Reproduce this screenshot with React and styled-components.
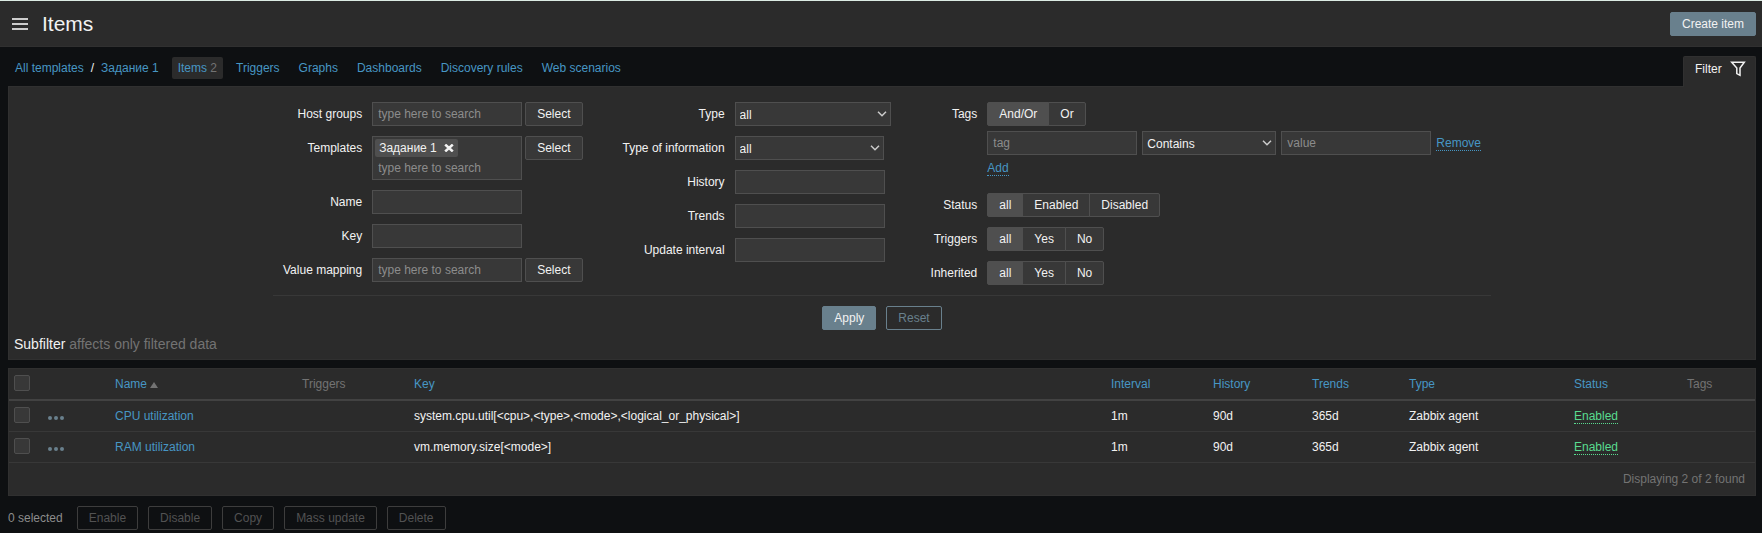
import React, { useState } from "react";
import styled, { createGlobalStyle, css } from "styled-components";

const color = {
  page: "#0e1012",
  panel: "#2b2b2b",
  line: "#303030",
  rowLine: "#383838",
  field: "#383838",
  fieldLine: "#4f4f4f",
  text: "#f2f2f2",
  muted: "#737373",
  placeholder: "#8c8c8c",
  link: "#4796c4",
  accent: "#69808d",
  green: "#59db8f",
};

const GlobalStyle = createGlobalStyle`
  *, *::before, *::after { box-sizing: border-box; }
  body {
    margin: 0;
    background: ${color.page};
    color: ${color.text};
    font: 12px/24px "Liberation Sans", Arial, sans-serif;
  }
  button, input, select { font: inherit; color: inherit; margin: 0; }
`;

const Header = styled.header`
  display: flex;
  align-items: center;
  gap: 14px;
  height: 47px;
  padding: 0 6px 0 12px;
  background: ${color.panel};
  border-top: 1px solid #dcebe3;
  border-bottom: 1px solid ${color.line};
`;

const MenuButton = styled.button`
  display: flex;
  padding: 0;
  border: 0;
  background: none;
`;

const Title = styled.h1`
  flex: 1;
  margin: 0;
  font-size: 21px;
  line-height: 24px;
  font-weight: normal;
`;

const Button = styled.button`
  height: 24px;
  padding: 0 11px;
  line-height: 22px;
  border: 1px solid ${color.fieldLine};
  border-radius: 2px;
  background: ${color.field};
  white-space: nowrap;
  ${(p) =>
    p.$kind === "primary" &&
    css`
      background: ${color.accent};
      border-color: ${color.accent};
    `}
  ${(p) =>
    p.$kind === "outline" &&
    css`
      background: none;
      color: ${color.accent};
      border-color: ${color.accent};
    `}
  &:disabled {
    background: none;
    color: #525252;
    border-color: #3d3d3d;
  }
`;

const Main = styled.main`
  padding: 0 6px 0 8px;
`;

const TopRow = styled.div`
  display: flex;
  justify-content: space-between;
  align-items: flex-start;
  height: 39px;
  padding-top: 9px;
`;

const Nav = styled.nav`
  display: flex;
  align-items: center;
  gap: 7px;
  padding: 1px 0 0 1px;
  line-height: 22px;
`;

const Link = styled.a`
  color: ${color.link};
  text-decoration: none;
`;

const NavLink = styled(Link)`
  padding: 0 6px;
  border-radius: 2px;
  white-space: nowrap;
  background: ${(p) => (p.$active ? color.panel : "none")};
`;

const Crumbs = styled.div`
  display: flex;
  gap: 1px;
`;

const Count = styled.span`
  color: ${color.muted};
`;

const FilterTab = styled.button`
  position: relative;
  display: flex;
  justify-content: space-between;
  width: 73px;
  height: 31px;
  padding: 4px 9px 0 11px;
  line-height: 16px;
  border: 1px solid ${color.line};
  border-bottom: 0;
  border-radius: 2px 2px 0 0;
  background: ${color.panel};
`;

const Panel = styled.section`
  background: ${color.panel};
  border: 1px solid ${color.line};
`;

const FilterForm = styled.form`
  padding: 15px 5px 0;
`;

const Columns = styled.div`
  display: flex;
  gap: 40px;
  width: fit-content;
  margin: 0 auto;
  padding: 0 10px;
  padding-bottom: 10px;
  border-bottom: 1px solid #383838;
`;

const Column = styled.div`
  display: grid;
  grid-template-columns: auto auto;
  column-gap: 10px;
  row-gap: 10px;
  align-content: start;
  justify-items: start;
`;

const labelStyle = css`
  justify-self: end;
  white-space: nowrap;
`;

const Label = styled.label`
  ${labelStyle}
`;

const GroupLabel = styled.span`
  ${labelStyle}
`;

const Line = styled.div`
  display: flex;
  align-items: flex-start;
  gap: ${(p) => p.$gap || 3}px;
`;

const TextInput = styled.input`
  display: block;
  width: 150px;
  height: 24px;
  padding: 0 5px;
  border: 1px solid ${color.fieldLine};
  border-radius: 0;
  background: ${color.field};
  &::placeholder { color: ${color.placeholder}; opacity: 1; }
`;

const MultiSelect = styled.div`
  width: 150px;
  height: 44px;
  padding: 2px;
  border: 1px solid ${color.fieldLine};
  background: ${color.field};
`;

const MultiInput = styled(TextInput)`
  width: 100%;
  height: 21px;
  padding: 0 3px;
  border: 0;
`;

const Chip = styled.span`
  display: flex;
  align-items: center;
  justify-content: space-between;
  width: 83px;
  height: 18px;
  padding: 0 4px;
  border-radius: 2px;
  background: ${color.fieldLine};
`;

const ChipRemove = styled.button`
  display: flex;
  padding: 0;
  border: 0;
  background: none;
`;

const SelectWrap = styled.span`
  display: grid;
  align-items: center;
  width: ${(p) => p.$width}px;
  & > * { grid-area: 1 / 1; }
  & > svg { justify-self: end; margin-right: 4px; pointer-events: none; }
`;

const NativeSelect = styled.select`
  appearance: none;
  width: 100%;
  height: 24px;
  padding: 0 20px 1px 4px;
  border: 1px solid ${color.fieldLine};
  border-radius: 0;
  background: ${color.field};
`;

const Segments = styled.div`
  display: flex;
`;

const Segment = styled.label`
  position: relative;
  height: 24px;
  padding: 0 11px;
  line-height: 22px;
  border: 1px solid ${color.fieldLine};
  background: ${color.field};
  white-space: nowrap;
  &:not(:first-child) { margin-left: -1px; }
  &:first-child { border-radius: 2px 0 0 2px; }
  &:last-child { border-radius: 0 2px 2px 0; }
  &:has(input:checked) { background: ${color.fieldLine}; }
`;

const SegmentInput = styled.input`
  position: absolute;
  inset: 0;
  width: 100%;
  height: 100%;
  opacity: 0;
`;

const TagBlock = styled.div`
  display: flex;
  flex-direction: column;
  align-items: flex-start;
  gap: 5px;
  padding-bottom: 6px;
`;

const DottedButton = styled.button`
  padding: 0;
  line-height: 14px;
  border: 0;
  border-bottom: 1px dotted;
  background: none;
  color: ${(p) => (p.$green ? color.green : color.link)};
`;

const AddSlot = styled.div`
  display: flex;
  padding: 1px 0;
  line-height: 14px;
`;

const RemoveSlot = styled(AddSlot)`
  padding: 5px 0 4px;
`;

const FormButtons = styled.div`
  display: flex;
  justify-content: center;
  gap: 10px;
  padding-top: 10px;
`;

const Subfilter = styled.h4`
  margin: 0;
  padding: 2px 0 3px;
  font-size: 14px;
  font-weight: normal;
`;

const TablePanel = styled(Panel)`
  margin-top: 8px;
`;

const Table = styled.table`
  width: 100%;
  table-layout: fixed;
  border-collapse: separate;
  border-spacing: 0;
  line-height: 16px;
`;

const Cell = styled.td`
  height: 31px;
  padding: 0 5px;
  border-bottom: 1px solid ${color.rowLine};
  text-align: left;
  white-space: nowrap;
`;

const HeadCell = styled(Cell)`
  height: 32px;
  border-bottom: 2px solid #424242;
  font-weight: normal;
  color: ${color.muted};
`;

const FootCell = styled.td`
  height: 32px;
  padding: 0 10px;
  text-align: right;
  color: ${color.muted};
`;

const Checkbox = styled.input`
  appearance: none;
  display: block;
  width: 16px;
  height: 16px;
  margin: 0 0 2px;
  border: 1px solid ${color.fieldLine};
  border-radius: 2px;
  background: ${color.field};
  &:checked { background: ${color.accent}; }
`;

const DotsButton = styled.button`
  display: flex;
  padding: 4px 0 0;
  border: 0;
  background: none;
`;

const SortArrow = styled.span`
  display: inline-block;
  margin-left: 3px;
  border: 4px solid transparent;
  border-top: 0;
  border-bottom: 6px solid ${color.muted};
`;

const Actions = styled.footer`
  display: flex;
  gap: 10px;
  padding: 10px 0 3px;
`;

const Selected = styled.span`
  margin-right: 4px;
  color: #8c8c8c;
`;

const Chevron = () => (
  <svg width="10" height="6" viewBox="0 0 10 6" fill="none" stroke="#ccc" strokeWidth="1.5" aria-hidden="true">
    <path d="M1 .8 5 4.8 9 .8" />
  </svg>
);

function Select({ options, width, ...rest }) {
  return (
    <SelectWrap $width={width}>
      <NativeSelect {...rest}>
        {options.map((o) => (
          <option key={o}>{o}</option>
        ))}
      </NativeSelect>
      <Chevron />
    </SelectWrap>
  );
}

function RadioRow({ label, name, options }) {
  const [value, setValue] = useState(options[0]);
  return (
    <Segments role="radiogroup" aria-label={label}>
      {options.map((o) => (
        <Segment key={o}>
          <SegmentInput type="radio" name={name} checked={value === o} onChange={() => setValue(o)} />
          {o}
        </Segment>
      ))}
    </Segments>
  );
}

function Field({ id, label, children }) {
  return (
    <>
      <Label htmlFor={id}>{label}</Label>
      <Line>{children || <TextInput id={id} />}</Line>
    </>
  );
}

function RadioField({ label, name, options }) {
  return (
    <>
      <GroupLabel>{label}</GroupLabel>
      <RadioRow label={label} name={name} options={options} />
    </>
  );
}

const navItems = ["Triggers", "Graphs", "Dashboards", "Discovery rules", "Web scenarios"];
const columnWidths = [34, 67, 187, 112, null, 102, 99, 97, 165, 113, 73];
const rows = [
  { name: "CPU utilization", key: "system.cpu.util[<cpu>,<type>,<mode>,<logical_or_physical>]" },
  { name: "RAM utilization", key: "vm.memory.size[<mode>]" },
];
const actions = ["Enable", "Disable", "Copy", "Mass update", "Delete"];

export default function App() {
  return (
    <>
      <GlobalStyle />
      <Header>
        <MenuButton aria-label="Show menu">
          <svg width="16" height="12" viewBox="0 0 16 12" fill="#ccc" aria-hidden="true">
            <path d="M0 0h16v2H0zM0 5h16v2H0zM0 10h16v2H0z" />
          </svg>
        </MenuButton>
        <Title>Items</Title>
        <Button $kind="primary">Create item</Button>
      </Header>
      <Main>
        <TopRow>
          <Nav>
            <Crumbs>
              <NavLink href="#templates">All templates</NavLink>
              <span>/</span>
              <NavLink href="#template">Задание 1</NavLink>
            </Crumbs>
            <NavLink href="#items" $active>
              Items <Count>2</Count>
            </NavLink>
            {navItems.map((n) => (
              <NavLink key={n} href="#nav">{n}</NavLink>
            ))}
          </Nav>
          <FilterTab>
            Filter
            <svg width="16" height="16" viewBox="0 0 16 16" fill="none" stroke="#f2f2f2" strokeWidth="1.5" aria-hidden="true">
              <path d="M1.7 1.2h12.6L10 7v7.3L6.8 12.6V7z" />
            </svg>
          </FilterTab>
        </TopRow>

        <Panel>
          <FilterForm onSubmit={(e) => e.preventDefault()}>
            <Columns>
              <Column>
                <Field id="groups" label="Host groups">
                  <TextInput id="groups" placeholder="type here to search" />
                  <Button type="button">Select</Button>
                </Field>
                <Field id="templates" label="Templates">
                  <MultiSelect>
                    <Chip>
                      Задание 1
                      <ChipRemove type="button" aria-label="Remove Задание 1">
                        <svg width="10" height="8" viewBox="0 0 10 8" stroke="#f2f2f2" strokeWidth="2.6" aria-hidden="true">
                          <path d="M1.2.6 8.8 7.4M8.8.6 1.2 7.4" />
                        </svg>
                      </ChipRemove>
                    </Chip>
                    <MultiInput id="templates" placeholder="type here to search" />
                  </MultiSelect>
                  <Button type="button">Select</Button>
                </Field>
                <Field id="name" label="Name" />
                <Field id="key" label="Key" />
                <Field id="mapping" label="Value mapping">
                  <TextInput id="mapping" placeholder="type here to search" />
                  <Button type="button">Select</Button>
                </Field>
              </Column>

              <Column>
                <Field id="type" label="Type">
                  <Select id="type" width={156} options={["all"]} />
                </Field>
                <Field id="info" label="Type of information">
                  <Select id="info" width={149} options={["all"]} />
                </Field>
                <Field id="history" label="History" />
                <Field id="trends" label="Trends" />
                <Field id="interval" label="Update interval" />
              </Column>

              <Column>
                <GroupLabel>Tags</GroupLabel>
                <TagBlock>
                  <RadioRow label="Tags" name="tags" options={["And/Or", "Or"]} />
                  <Line $gap={5}>
                    <TextInput placeholder="tag" aria-label="Tag" />
                    <Select width={134} aria-label="Operator" options={["Contains"]} />
                    <TextInput placeholder="value" aria-label="Value" />
                    <RemoveSlot>
                      <DottedButton type="button">Remove</DottedButton>
                    </RemoveSlot>
                  </Line>
                  <AddSlot>
                    <DottedButton type="button">Add</DottedButton>
                  </AddSlot>
                </TagBlock>
                <RadioField label="Status" name="status" options={["all", "Enabled", "Disabled"]} />
                <RadioField label="Triggers" name="triggers" options={["all", "Yes", "No"]} />
                <RadioField label="Inherited" name="inherited" options={["all", "Yes", "No"]} />
              </Column>
            </Columns>
            <FormButtons>
              <Button $kind="primary">Apply</Button>
              <Button type="button" $kind="outline">Reset</Button>
            </FormButtons>
            <Subfilter>
              Subfilter <Count>affects only filtered data</Count>
            </Subfilter>
          </FilterForm>
        </Panel>

        <TablePanel>
          <Table>
            <colgroup>
              {columnWidths.map((w, i) => (
                <col key={i} width={w || undefined} />
              ))}
            </colgroup>
            <thead>
              <tr>
                <HeadCell as="th"><Checkbox type="checkbox" aria-label="Select all" /></HeadCell>
                <HeadCell as="th" />
                <HeadCell as="th"><Link href="#sort">Name<SortArrow /></Link></HeadCell>
                <HeadCell as="th">Triggers</HeadCell>
                {["Key", "Interval", "History", "Trends", "Type", "Status"].map((h) => (
                  <HeadCell as="th" key={h}><Link href="#sort">{h}</Link></HeadCell>
                ))}
                <HeadCell as="th">Tags</HeadCell>
              </tr>
            </thead>
            <tbody>
              {rows.map((r) => (
                <tr key={r.name}>
                  <Cell><Checkbox type="checkbox" aria-label={`Select ${r.name}`} /></Cell>
                  <Cell>
                    <DotsButton aria-label={`Menu for ${r.name}`}>
                      <svg width="16" height="4" viewBox="0 0 16 4" fill={color.accent} aria-hidden="true">
                        <circle cx="2" cy="2" r="2" />
                        <circle cx="8" cy="2" r="2" />
                        <circle cx="14" cy="2" r="2" />
                      </svg>
                    </DotsButton>
                  </Cell>
                  <Cell><Link href="#item">{r.name}</Link></Cell>
                  <Cell />
                  <Cell>{r.key}</Cell>
                  <Cell>1m</Cell>
                  <Cell>90d</Cell>
                  <Cell>365d</Cell>
                  <Cell>Zabbix agent</Cell>
                  <Cell><DottedButton $green>Enabled</DottedButton></Cell>
                  <Cell />
                </tr>
              ))}
            </tbody>
            <tfoot>
              <tr>
                <FootCell colSpan={11}>Displaying 2 of 2 found</FootCell>
              </tr>
            </tfoot>
          </Table>
        </TablePanel>

        <Actions>
          <Selected>0 selected</Selected>
          {actions.map((a) => (
            <Button key={a} disabled>{a}</Button>
          ))}
        </Actions>
      </Main>
    </>
  );
}
